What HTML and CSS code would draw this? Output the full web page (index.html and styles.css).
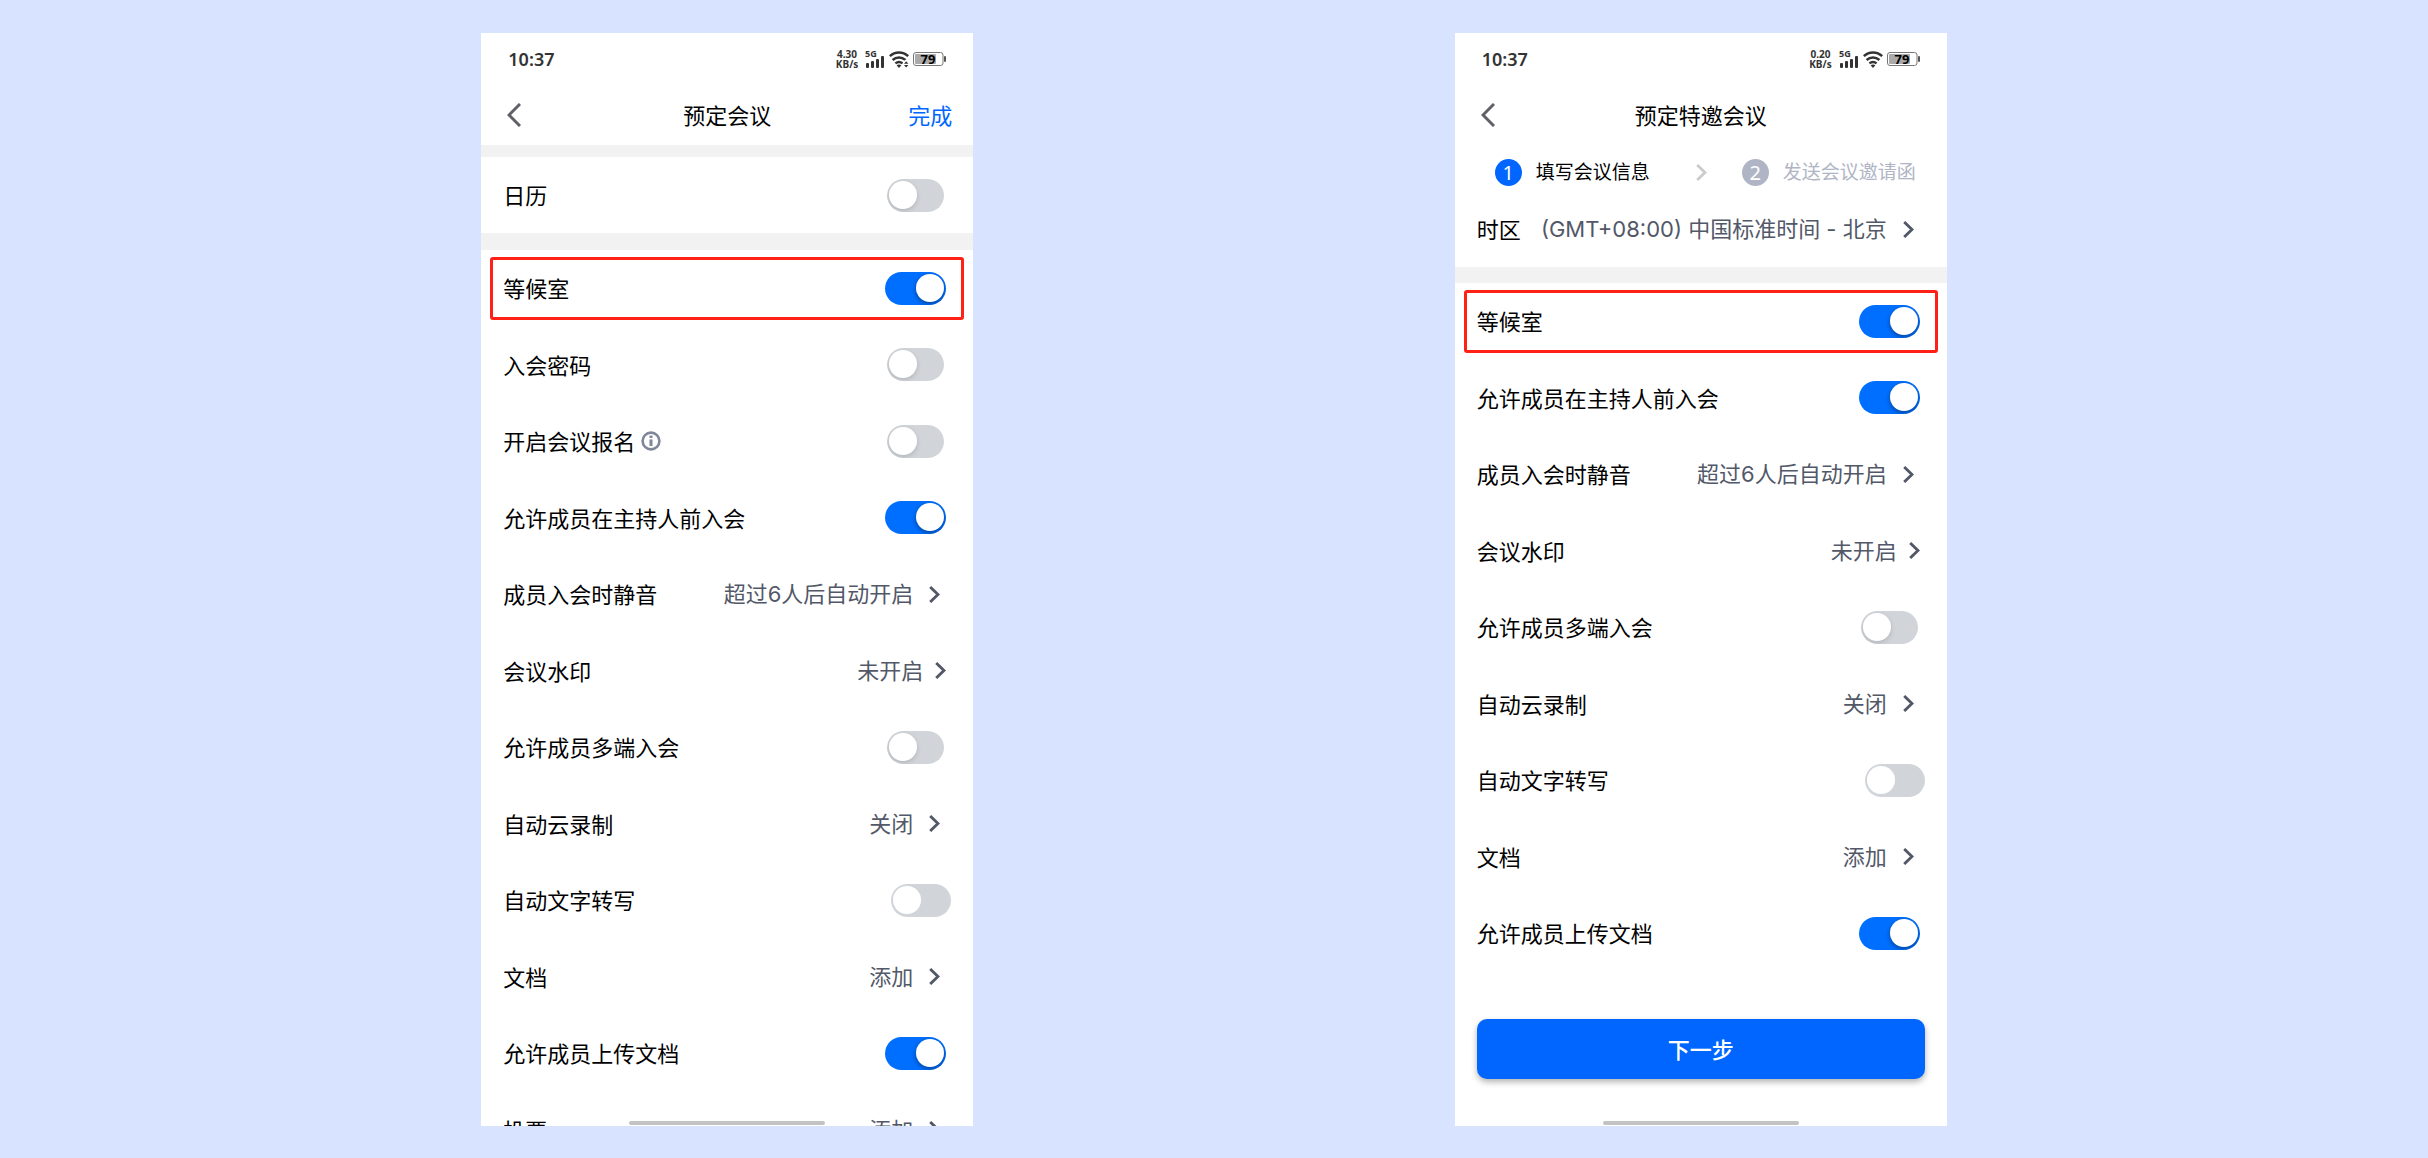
FILE: index.html
```html
<!DOCTYPE html>
<html lang="zh-CN">
<head>
  <meta charset="UTF-8">
  <title>预定会议</title>
  <link rel="stylesheet" href="styles.css">
</head>
<body>
  <!-- Shared icons -->
  <svg class="sprite" aria-hidden="true">
    <symbol id="back" viewBox="0 0 14 24">
      <path d="M13 1 L2 12 L13 23" fill="none" stroke="currentColor" stroke-width="3"/>
    </symbol>
    <symbol id="arrow" viewBox="0 0 11 17">
      <path d="M1.2 1 L9 8.5 L1.2 16" fill="none" stroke="currentColor" stroke-width="2.9"/>
    </symbol>
    <symbol id="info" viewBox="0 0 20 20">
      <circle cx="10" cy="10" r="8.4" fill="none" stroke="currentColor" stroke-width="2.6"/>
      <rect x="8.5" y="4.6" width="3" height="2.4" fill="currentColor"/>
      <rect x="8.5" y="8.4" width="3" height="6.6" fill="currentColor"/>
    </symbol>
    <symbol id="signal" viewBox="0 0 20 18">
      <rect x="1" y="13" width="3" height="5" rx="1"/>
      <rect x="6" y="11" width="3" height="7" rx="1"/>
      <rect x="11" y="9" width="3" height="9" rx="1"/>
      <rect x="16" y="6" width="3" height="12" rx="1"/>
    </symbol>
    <symbol id="wifi" viewBox="0 0 20 17">
      <path d="M0.8 5.2 C6 0.2 14 0.2 19.2 5.2 M3.6 9 C7.4 5.6 12.6 5.6 16.4 9 M6.4 12.4 C8.6 10.6 11.4 10.6 13.6 12.4" fill="none" stroke="currentColor" stroke-width="2.5"/>
      <path d="M7.6 14.2 Q10 12.8 12.4 14.2 L10 17 Z"/>
    </symbol>
    <symbol id="battery" viewBox="0 0 33 14">
      <rect x="0.5" y="0.5" width="29.5" height="13" rx="2.5" fill="#fff" stroke="#777"/>
      <rect x="2" y="2" width="21" height="10" rx="1" fill="#aaa"/>
      <rect x="31" y="4" width="2" height="6" rx="1" fill="#555"/>
    </symbol>
  </svg>

  <!-- Regular meeting -->
  <main class="phone">
    <div class="status">
      <span class="time">10:37</span>
      <div class="status-icons">
        <span class="speed">4.30<br>KB/s</span>
        <svg class="signal" viewBox="0 0 20 18"><use href="#signal"/><text x="0" y="7" class="net">5G</text></svg>
        <svg class="wifi" viewBox="0 0 20 17">
          <use href="#wifi"/>
          <path d="M14 9.6 H20 V17 H14 Z" fill="#fff"/>
          <path d="M15 12.8 L17.2 10.2 L19.4 12.8 Z M15 14 L17.2 16.6 L19.4 14 Z"/>
        </svg>
        <svg class="battery" viewBox="0 0 33 14"><use href="#battery"/><text x="15" y="12" class="charge">79</text></svg>
      </div>
    </div>
    <header class="nav">
      <button class="back" type="button" aria-label="返回"><svg><use href="#back"/></svg></button>
      <h1>预定会议</h1>
      <button class="done" type="button">完成</button>
    </header>

    <section class="group line-top">
      <div class="row"><label for="calendar">日历</label><input class="switch" type="checkbox" id="calendar"></div>
    </section>

    <section class="group band-top">
      <div class="row marked"><label for="waiting1">等候室</label><input class="switch" type="checkbox" id="waiting1" checked></div>
      <div class="row"><label for="password">入会密码</label><input class="switch" type="checkbox" id="password"></div>
      <div class="row"><label for="signup">开启会议报名<svg class="info"><use href="#info"/></svg></label><input class="switch" type="checkbox" id="signup"></div>
      <div class="row"><label for="before1">允许成员在主持人前入会</label><input class="switch" type="checkbox" id="before1" checked></div>
      <button class="row" type="button"><span>成员入会时静音</span><span class="value">超过6人后自动开启</span><svg class="arrow"><use href="#arrow"/></svg></button>
      <button class="row tight" type="button"><span>会议水印</span><span class="value">未开启</span><svg class="arrow"><use href="#arrow"/></svg></button>
      <div class="row"><label for="multi1">允许成员多端入会</label><input class="switch" type="checkbox" id="multi1"></div>
      <button class="row" type="button"><span>自动云录制</span><span class="value">关闭</span><svg class="arrow"><use href="#arrow"/></svg></button>
      <div class="row"><label for="trans1">自动文字转写</label><input class="switch flat" type="checkbox" id="trans1"></div>
      <button class="row" type="button"><span>文档</span><span class="value">添加</span><svg class="arrow"><use href="#arrow"/></svg></button>
      <div class="row"><label for="upload1">允许成员上传文档</label><input class="switch" type="checkbox" id="upload1" checked></div>
      <button class="row" type="button"><span>投票</span><span class="value">添加</span><svg class="arrow"><use href="#arrow"/></svg></button>
    </section>
    <div class="home-bar"></div>
  </main>

  <!-- Invitation meeting -->
  <main class="phone">
    <div class="status">
      <span class="time">10:37</span>
      <div class="status-icons">
        <span class="speed">0.20<br>KB/s</span>
        <svg class="signal" viewBox="0 0 20 18"><use href="#signal"/><text x="0" y="7" class="net">5G</text></svg>
        <svg class="wifi" viewBox="0 0 20 17"><use href="#wifi"/></svg>
        <svg class="battery" viewBox="0 0 33 14"><use href="#battery"/><text x="15" y="12" class="charge">79</text></svg>
      </div>
    </div>
    <header class="nav">
      <button class="back" type="button" aria-label="返回"><svg><use href="#back"/></svg></button>
      <h1>预定特邀会议</h1>
    </header>

    <div class="steps">
      <div class="step active"><span class="num">1</span><span>填写会议信息</span></div>
      <svg class="step-arrow"><use href="#arrow"/></svg>
      <div class="step"><span class="num">2</span><span>发送会议邀请函</span></div>
    </div>

    <section class="group">
      <button class="row" type="button"><span>时区</span><span class="value">(GMT+08:00) 中国标准时间 - 北京</span><svg class="arrow"><use href="#arrow"/></svg></button>
    </section>

    <section class="group band-top">
      <div class="row marked"><label for="waiting2">等候室</label><input class="switch" type="checkbox" id="waiting2" checked></div>
      <div class="row"><label for="before2">允许成员在主持人前入会</label><input class="switch" type="checkbox" id="before2" checked></div>
      <button class="row" type="button"><span>成员入会时静音</span><span class="value">超过6人后自动开启</span><svg class="arrow"><use href="#arrow"/></svg></button>
      <button class="row tight" type="button"><span>会议水印</span><span class="value">未开启</span><svg class="arrow"><use href="#arrow"/></svg></button>
      <div class="row"><label for="multi2">允许成员多端入会</label><input class="switch" type="checkbox" id="multi2"></div>
      <button class="row" type="button"><span>自动云录制</span><span class="value">关闭</span><svg class="arrow"><use href="#arrow"/></svg></button>
      <div class="row"><label for="trans2">自动文字转写</label><input class="switch flat" type="checkbox" id="trans2"></div>
      <button class="row" type="button"><span>文档</span><span class="value">添加</span><svg class="arrow"><use href="#arrow"/></svg></button>
      <div class="row"><label for="upload2">允许成员上传文档</label><input class="switch" type="checkbox" id="upload2" checked></div>
    </section>

    <div class="footer">
      <button class="next" type="button">下一步</button>
    </div>
    <div class="home-bar"></div>
  </main>
</body>
</html>
```

FILE: styles.css
```css
*,
*::before,
*::after {
  box-sizing: border-box;
}

body {
  margin: 0;
  height: 100vh;
  padding: 33px 0 32px;
  display: flex;
  justify-content: space-evenly;
  background: #d8e3ff;
  color: #000;
  font-family: "Noto Sans", "Noto Sans CJK SC", sans-serif;
  font-size: 22px;
  line-height: 32px;
}

button {
  margin: 0;
  padding: 0;
  border: none;
  background: none;
  color: inherit;
  font: inherit;
  cursor: pointer;
}

svg {
  display: block;
  flex-shrink: 0;
  overflow: visible;
}

.sprite {
  position: absolute;
  width: 0;
  height: 0;
}

.phone {
  position: relative;
  width: 492px;
  overflow: hidden;
  background: #fff;
}

/* status bar */
.status {
  display: flex;
  align-items: center;
  justify-content: space-between;
  height: 52px;
  padding: 0 27px;
  color: #333;
}

.time {
  font-size: 18px;
  font-weight: 600;
}

.status-icons {
  display: flex;
  align-items: center;
  gap: 4px;
  fill: #333;
}

.speed {
  margin-right: 3px;
  font-size: 10px;
  font-weight: 700;
  line-height: 10px;
  text-align: center;
}

.signal {
  width: 20px;
  height: 18px;
}

.net {
  font-size: 9px;
  font-weight: 700;
}

.wifi {
  width: 20px;
  height: 17px;
}

.battery {
  width: 33px;
  height: 14px;
}

.charge {
  font-size: 13px;
  font-weight: 700;
  text-anchor: middle;
  fill: #000;
}

/* title bar */
.nav {
  display: grid;
  grid-template-columns: 1fr auto 1fr;
  align-items: center;
  height: 60px;
  padding: 0 21px;
}

.nav h1 {
  margin: 0;
  font-size: 22px;
  font-weight: 400;
}

.back {
  justify-self: start;
  margin-left: 5px;
  color: #5f6166;
}

.back svg {
  width: 14px;
  height: 24px;
}

.done {
  justify-self: end;
  color: #0066ff;
}

/* settings list */
.group {
  display: grid;
  grid-auto-rows: 76px 77px;
}

.line-top {
  border-top: 12px solid #f2f2f2;
}

.band-top {
  border-top: 17px solid #f2f2f2;
}

.steps ~ .band-top {
  border-top-width: 16px;
}

.row {
  position: relative;
  display: flex;
  align-items: center;
  padding: 0 27px 0 22px;
  text-align: left;
  white-space: nowrap;
}

.row label {
  display: flex;
  align-items: center;
}

.marked::after {
  content: "";
  position: absolute;
  top: 7px;
  left: 9px;
  right: 9px;
  height: 63px;
  border: 3px solid #ff2115;
  border-radius: 3px;
  pointer-events: none;
}

.info {
  width: 20px;
  height: 20px;
  margin-left: 6px;
  color: #80879a;
}

.value {
  margin-left: auto;
  color: #525868;
  font-family: Inter, "Noto Sans CJK SC", sans-serif;
}

.arrow {
  width: 11px;
  height: 17px;
  margin: 0 6px 0 16px;
  color: #525868;
}

.tight .arrow {
  margin: 0 0 0 12px;
}

.switch {
  appearance: none;
  width: 57px;
  height: 33px;
  margin: 0 2px 0 auto;
  padding: 2px;
  border-radius: 17px;
  background: #d1d5da;
  overflow: hidden;
  cursor: pointer;
}

.switch::before {
  content: "";
  display: block;
  width: 28px;
  height: 28px;
  border-radius: 50%;
  background: #fff;
  box-shadow: 0 2px 5px rgba(0, 0, 0, 0.15);
}

.switch:checked {
  width: 61px;
  margin-right: 0;
  background: #006fff;
}

.switch:checked::before {
  margin-left: auto;
  box-shadow: 0 2px 5px rgba(0, 0, 0, 0.4);
}

.flat {
  width: 60px;
  margin-right: -5px;
}

.flat::before {
  box-shadow: none;
}

/* steps */
.steps {
  display: flex;
  align-items: center;
  padding: 14px 30px 5px 40px;
  font-size: 19px;
  line-height: 27px;
  white-space: nowrap;
}

.step {
  display: flex;
  gap: 14px;
  color: #b0b5c5;
}

.step.active {
  color: #000;
}

.num {
  width: 27px;
  height: 27px;
  border-radius: 50%;
  background: #b0b5c5;
  color: #fff;
  font-size: 20px;
  text-align: center;
}

.active .num {
  background: #0066ff;
}

.step-arrow {
  width: 11px;
  height: 17px;
  margin: 0 35px 0 46px;
  color: #ccc;
}

/* bottom */
.footer {
  padding: 48px 22px 0;
}

.next {
  width: 100%;
  height: 60px;
  border-radius: 10px;
  background: #0066ff;
  color: #fff;
  font-weight: 500;
  box-shadow: 0 3px 6px rgba(0, 0, 0, 0.3);
}

.home-bar {
  position: absolute;
  left: 50%;
  bottom: 1px;
  width: 196px;
  height: 4px;
  margin-left: -98px;
  border-radius: 2px;
  background: #c3c3c3;
}
```
